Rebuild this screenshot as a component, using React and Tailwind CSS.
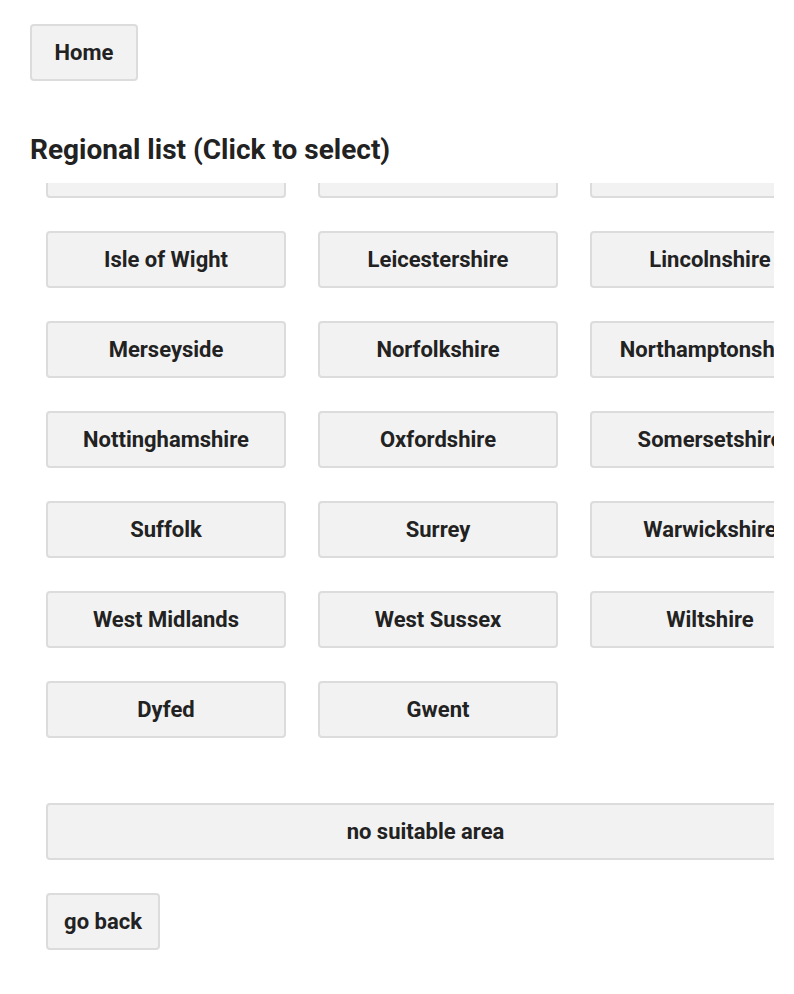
import React from 'react';

const regions = [
  'Devon', 'Dorset', 'Essex',
  'Hampshire', 'Hertfordshire', 'Kent',
  'Isle of Wight', 'Leicestershire', 'Lincolnshire',
  'Merseyside', 'Norfolkshire', 'Northamptonshire',
  'Nottinghamshire', 'Oxfordshire', 'Somersetshire',
  'Suffolk', 'Surrey', 'Warwickshire',
  'West Midlands', 'West Sussex', 'Wiltshire',
  'Dyfed', 'Gwent',
];

const btn =
  'h-[57px] rounded-[4px] border-2 border-[#dcdcdc] bg-[#f2f2f2] text-[22px] font-bold text-[#222] whitespace-nowrap overflow-hidden';

export default function App() {
  const listRef = React.useRef(null);

  React.useLayoutEffect(() => {
    if (listRef.current) listRef.current.scrollTop = 132;
  }, []);

  return (
    <div className="min-h-screen bg-white px-[30px] pt-[24px] font-['Roboto','Liberation_Sans',sans-serif]">
      <button className={`${btn} w-[108px]`}>Home</button>

      <h2 className="mt-[53px] text-[28px] leading-[32px] font-bold text-[#222]">
        Regional list (Click to select)
      </h2>

      <div ref={listRef} className="mt-[17px] h-[811px] w-[744px] overflow-hidden">
        <div className="pl-[16px] pb-[120px]">
          <div className="grid grid-cols-[repeat(3,240px)] gap-x-[32px] gap-y-[33px] w-max">
            {regions.map((r) => (
              <button key={r} className={`${btn} w-[240px]`}>
                {r}
              </button>
            ))}
          </div>

          <button className={`${btn} mt-[65px] block w-[759px]`}>no suitable area</button>

          <button className={`${btn} mt-[33px] block w-[114px]`}>go back</button>
        </div>
      </div>
    </div>
  );
}
